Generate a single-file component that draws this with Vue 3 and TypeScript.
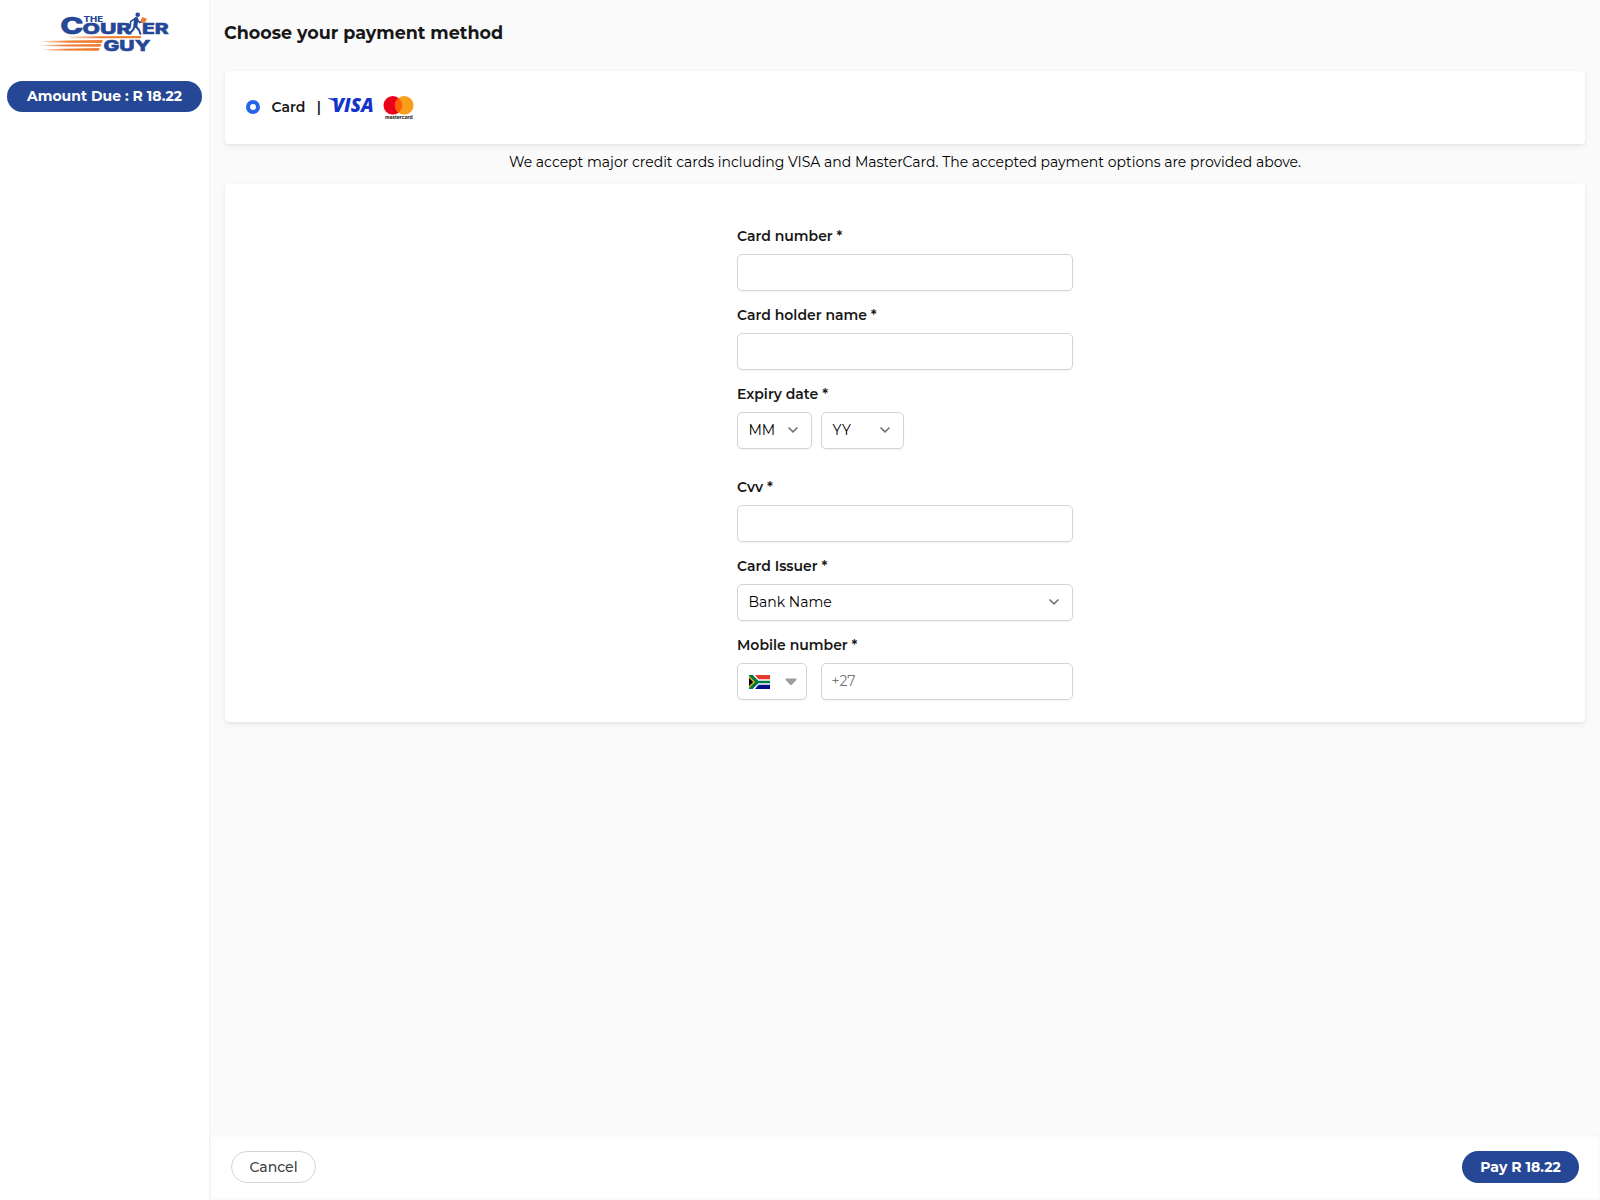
<script setup lang="ts">
interface Field {
  label: string
  kind: 'input' | 'expiry' | 'issuer' | 'mobile'
}

const fields: Field[] = [
  { label: 'Card number *', kind: 'input' },
  { label: 'Card holder name *', kind: 'input' },
  { label: 'Expiry date *', kind: 'expiry' },
  { label: 'Cvv *', kind: 'input' },
  { label: 'Card Issuer *', kind: 'issuer' },
  { label: 'Mobile number *', kind: 'mobile' },
]
</script>

<template>
  <div class="page">
    <aside class="sidebar">
      <svg class="logo" width="128" height="42" viewBox="0 0 128 42">
        <defs>
          <linearGradient id="streak" x1="0" x2="1">
            <stop offset="0" stop-color="#ee7d31" stop-opacity="0.15" />
            <stop offset="0.45" stop-color="#ee7d31" />
          </linearGradient>
        </defs>
        <g class="logo-text">
          <text x="19.2" y="22.4" font-size="23.5" textLength="23.2" lengthAdjust="spacingAndGlyphs">C</text>
          <text x="42.5" y="10.2" font-size="7.2" stroke-width="0" textLength="19.5" lengthAdjust="spacingAndGlyphs">THE</text>
          <text x="41.5" y="22.4" font-size="15" textLength="49" lengthAdjust="spacingAndGlyphs">OUR</text>
          <text x="101" y="22.4" font-size="15" textLength="26.8" lengthAdjust="spacingAndGlyphs">ER</text>
          <text x="62.5" y="38.8" font-size="14.8" textLength="47" lengthAdjust="spacingAndGlyphs">GUY</text>
        </g>
        <path d="M26 24.4L100 24V26.2H30Z" fill="url(#streak)" />
        <path d="M-1 29L61.8 28L60.8 31L8 30.4Z" fill="url(#streak)" />
        <path d="M-3 33L60.4 31.9L59.4 34.7L8 34.2Z" fill="url(#streak)" />
        <path d="M0 37.3L58.6 35.9L57.6 38.8L10 38.4Z" fill="url(#streak)" />
        <circle cx="96.7" cy="2.7" r="2.3" fill="#264796" />
        <g fill="none" stroke="#264796" stroke-linecap="round" stroke-linejoin="round">
          <path d="M95.2 7.2L94.4 13.5" stroke-width="4.2" />
          <path d="M93.5 6.8L89.6 9.6L89.4 13M96.5 7.8L98.6 10.4L101.5 9.8" stroke-width="1.6" />
          <path d="M93.6 14.5L92 18L88.2 21.8M95 14.5L98 18L99.4 21.8" stroke-width="2" />
        </g>
        <path d="M101.2 5L106 6.8L103.8 11.2L99.2 9.5Z" fill="#ee7d31" />
      </svg>
      <div class="pill amount">Amount Due : R 18.22</div>
    </aside>

    <main class="main">
      <section class="content">
        <h1>Choose your payment method</h1>

        <div class="card method">
          <span class="radio"></span>
          <span class="method-name">Card</span>
          <span class="bar">|</span>
          <svg class="brands" width="90" height="28" viewBox="0 0 90 28">
            <text class="visa" x="4.5" y="15.8" font-size="18.5" textLength="41.2" lengthAdjust="spacingAndGlyphs">VISA</text>
            <path d="M0 2.3H7L9 8Q5.5 3.7 0 2.7Z" fill="#1434cb" />
            <circle cx="64.8" cy="9.3" r="9.3" fill="#eb001b" />
            <circle cx="76.2" cy="9.3" r="9.3" fill="#f79e1b" />
            <path d="M70.5 1.95A9.3 9.3 0 0 1 70.5 16.65A9.3 9.3 0 0 1 70.5 1.95Z" fill="#ff5f00" />
            <text class="mc" x="57" y="23.2" font-size="4.8" textLength="27.5" lengthAdjust="spacingAndGlyphs">mastercard</text>
          </svg>
        </div>

        <p class="note">We accept major credit cards including VISA and MasterCard. The accepted payment options are provided above.</p>

        <div class="card form-card">
          <form class="form">
            <div v-for="f in fields" :key="f.label" class="field" :class="f.kind">
              <label>{{ f.label }}</label>
              <div v-if="f.kind === 'input'" class="box"></div>
              <div v-else-if="f.kind === 'expiry'" class="row">
                <div class="box month">
                  <span>MM</span>
                  <svg class="chevron" width="12" height="8" viewBox="0 0 12 8"><path d="M1.5 1.5L6 5.9L10.5 1.5" /></svg>
                </div>
                <div class="box year">
                  <span>YY</span>
                  <svg class="chevron" width="12" height="8" viewBox="0 0 12 8"><path d="M1.5 1.5L6 5.9L10.5 1.5" /></svg>
                </div>
              </div>
              <div v-else-if="f.kind === 'issuer'" class="box">
                <span>Bank Name</span>
                <svg class="chevron" width="12" height="8" viewBox="0 0 12 8"><path d="M1.5 1.5L6 5.9L10.5 1.5" /></svg>
              </div>
              <div v-else class="row">
                <div class="box country">
                  <svg width="21" height="14" viewBox="0 0 21 14">
                    <rect width="21" height="14" fill="#fff" />
                    <path d="M6 0H21V4.2H9.5Z" fill="#e8392d" />
                    <path d="M6 14H21V9.8H9.5Z" fill="#000c8a" />
                    <path d="M0 0H3.7L9.4 5.8H21V8.2H9.4L3.7 14H0Z" fill="#007847" />
                    <path d="M0 1L6 7L0 13Z" fill="#ffb915" />
                    <path d="M0 2.8L4.2 7L0 11.2Z" fill="#000" />
                  </svg>
                  <svg class="caret" width="12" height="8" viewBox="0 0 12 8"><path d="M.6 .5H11.4V2L6.5 7H5.5L.6 2Z" fill="#9d9d9d" /></svg>
                </div>
                <div class="box phone"><span>+27</span></div>
              </div>
            </div>
          </form>
        </div>
      </section>

      <footer class="footer">
        <button class="cancel" type="button">Cancel</button>
        <button class="pill pay" type="button">Pay R 18.22</button>
      </footer>
    </main>
  </div>
</template>

<style>
body {
  margin: 0;
}
</style>

<style scoped>
.page {
  display: flex;
  height: 1200px;
  overflow: hidden;
  background: #fafafa;
  color: #171717;
  font: 400 14px/20px Montserrat, Inter, sans-serif;
}
.page * {
  box-sizing: border-box;
}
.sidebar {
  width: 209px;
  flex: none;
  padding: 12px 7px 0;
  background: #fff;
  box-shadow: 0 0 2px rgba(0, 0, 0, 0.08);
}
.logo {
  display: block;
  margin: 0 0 27px 34px;
  overflow: visible;
}
.logo-text {
  font-family: Inter, sans-serif;
  font-weight: 800;
  fill: #264796;
  stroke: #264796;
  stroke-width: 0.5;
}
.pill {
  display: flex;
  align-items: center;
  justify-content: center;
  border-radius: 16px;
  background: #264796;
  color: #fff;
  font-weight: 700;
}
.amount {
  width: 195px;
  height: 31px;
  padding-bottom: 1px;
}
.main {
  flex: 1;
  display: flex;
  flex-direction: column;
}
.content {
  flex: 1;
  padding: 20px 15px 0 16px;
}
h1 {
  margin: 0 0 26px -1px;
  font-size: 17.5px;
  line-height: 25px;
  font-weight: 700;
}
.card {
  border-radius: 4px;
  background: #fff;
  box-shadow: 0 1px 3px rgba(0, 0, 0, 0.06), 0 3px 6px rgba(0, 0, 0, 0.05);
}
.method {
  display: flex;
  align-items: center;
  height: 73px;
  padding: 0 0 2px 21px;
}
.radio {
  width: 14px;
  height: 14px;
  border: 4px solid #2563eb;
  border-radius: 50%;
  background: #fff;
}
.method-name {
  margin-left: 11.5px;
  font-weight: 600;
}
.bar {
  margin: 0 7px 0 11.5px;
  font-weight: 600;
}
.brands {
  overflow: visible;
  margin-top: 6px;
}
.visa {
  font-family: "Open Sans", sans-serif;
  font-style: italic;
  font-weight: 800;
  fill: #1434cb;
}
.mc {
  font-family: Inter, sans-serif;
  font-weight: 700;
  fill: #111;
}
.note {
  margin: 8px 0 12px;
  color: #000;
  text-align: center;
}
.form-card {
  height: 538px;
  padding-top: 42px;
}
.form {
  width: 336px;
  margin: 0 auto;
}
.field {
  margin-bottom: 14px;
}
.field.expiry {
  margin-bottom: 28px;
}
label {
  display: block;
  height: 20px;
  margin-bottom: 8px;
  font-weight: 600;
}
.box {
  display: flex;
  align-items: center;
  justify-content: space-between;
  height: 37px;
  padding: 0 12px 2px 10.5px;
  border: 1px solid #d4d4d4;
  border-radius: 5px;
  box-shadow: 0 1px 2px rgba(0, 0, 0, 0.05);
  color: #000;
}
.row {
  display: flex;
}
.month {
  width: 75px;
  margin-right: 9px;
}
.year {
  width: 83px;
}
.country {
  width: 70px;
  margin-right: 14px;
  padding: 0 9.5px 0 11px;
}
.caret {
  margin-top: 1px;
}
.phone {
  flex: 1;
  padding-left: 9.5px;
  color: #757575;
}
.chevron {
  margin-top: 1px;
  fill: none;
  stroke: #737373;
  stroke-width: 1.6;
}
.footer {
  display: flex;
  justify-content: space-between;
  align-items: flex-start;
  height: 65px;
  margin-left: 1px;
  padding: 16px 21px 0;
  background: #fff;
  box-shadow: 0 0 2px rgba(0, 0, 0, 0.05), inset 0 0 4px rgba(0, 0, 0, 0.05);
}
button {
  height: 32px;
  padding: 0;
  border: 0;
  font: inherit;
}
.cancel {
  width: 85px;
  border: 1px solid #d4d4d4;
  border-radius: 16px;
  background: #fff;
  color: #404040;
  font-weight: 500;
}
.pay {
  width: 117px;
  font-weight: 700;
}
</style>
